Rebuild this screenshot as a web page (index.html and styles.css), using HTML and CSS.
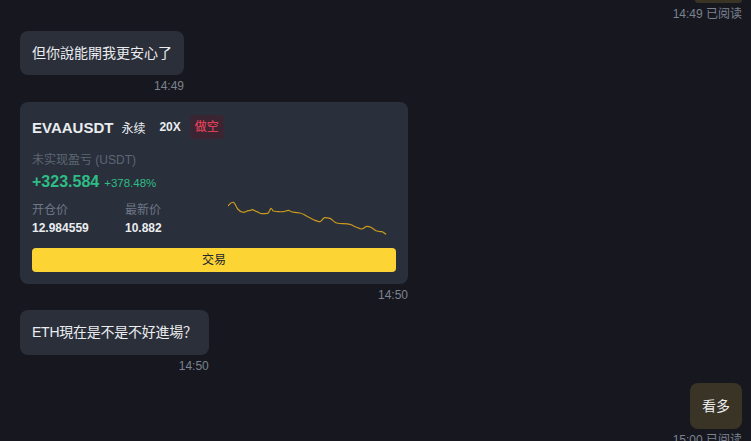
FILE: index.html
```html
<!DOCTYPE html>
<html lang="zh">
<head>
<meta charset="utf-8">
<link rel="stylesheet" href="styles.css">
</head>
<body>
<div class="chat">
  <div class="group mine">
    <div class="remnant"></div>
    <div class="meta">14:49 已阅读</div>
  </div>

  <div class="group theirs g1">
    <div class="bubble">但你說能開我更安心了</div>
    <div class="meta">14:49</div>
  </div>

  <div class="group theirs g2">
    <div class="card">
      <div class="title-row">
        <span class="symbol">EVAAUSDT</span>
        <span class="perp">永续</span>
        <span class="lev">20X</span>
        <span class="tag">做空</span>
      </div>
      <div class="pnl-label">未实现盈亏 (USDT)</div>
      <div class="pnl-row">
        <span class="pnl">+323.584</span>
        <span class="pct">+378.48%</span>
      </div>
      <div class="stats">
        <div class="stat">
          <div class="stat-label">开仓价</div>
          <div class="stat-value">12.984559</div>
        </div>
        <div class="stat">
          <div class="stat-label">最新价</div>
          <div class="stat-value">10.882</div>
        </div>
        <svg class="spark" viewBox="0 0 160 40" width="160" height="40">
          <path d="M0.3 6.7 C2 4.5 3.5 3 5.3 3.3 S8 8 9.7 10 S13 13.3 15.3 13.3 S18.5 11.7 20.3 11.7 S23 11 24.3 10.7 S27 12.5 28.7 12.7 S32 14.7 33.7 14.7 S38 14.6 39.7 14.3 S42 9.3 43 9.3 S44.5 12 45.3 12 S48 12.7 50.3 12.7 S53.5 12.8 55.3 12.7 S58.5 11.3 60.3 11.3 S62.5 12.8 64.3 13 S69 13.5 72 14 S76 16 80.3 18 S84.5 20.6 87 21.3 S90.5 22.8 92 22.7 S95 18.7 97 18.7 S100.5 19 102 19.3 S106 23.5 108.7 24 S112 24.5 115.3 24.7 S120 25 122 25.3 S125 27 127 27.7 S132 30 133.7 30 S137.5 27.3 138.7 27.3 S141.5 27.5 143.7 28.7 S147 31.5 148.7 32 S152 32.5 153.7 32.7 S156 34 157.7 35" fill="none" stroke="#c99a1d" stroke-width="1.2" stroke-linecap="round" stroke-linejoin="round"/>
        </svg>
      </div>
      <div class="trade">交易</div>
    </div>
    <div class="meta">14:50</div>
  </div>

  <div class="group theirs g3">
    <div class="bubble tight">ETH現在是不是不好進場？</div>
    <div class="meta">14:50</div>
  </div>

  <div class="group mine g4">
    <div class="bubble own">看多</div>
    <div class="meta">15:00 已阅读</div>
  </div>
</div>
</body>
</html>
```

FILE: styles.css
```css
* { box-sizing: border-box; }
html, body {
  margin: 0;
  padding: 0;
  background: #17181f;
  height: 441px;
  overflow: hidden;
}
body {
  font-family: "Liberation Sans", "Noto Sans CJK SC", sans-serif;
  color: #eaecef;
}
.chat {
  display: flex;
  flex-direction: column;
  padding: 0 9px 0 20px;
}
.group {
  display: flex;
  flex-direction: column;
}
.group.theirs {
  align-self: flex-start;
  align-items: flex-end;
}
.group.mine {
  align-self: flex-end;
  align-items: flex-end;
}
.remnant {
  width: 47px;
  height: 3px;
  background: #3a3426;
  border-radius: 0 0 8px 8px;
}
.meta {
  font-size: 12px;
  line-height: 14px;
  color: #7b8290;
  margin-top: 4px;
  white-space: nowrap;
}
.g1 { margin-top: 10px; }
.g2 { margin-top: 9px; }
.g3 { margin-top: 8px; }
.g4 { margin-top: 10px; }
.bubble {
  background: #2a2f3a;
  border-radius: 8px;
  padding: 12px 12px;
  font-size: 14px;
  line-height: 20px;
  color: #eaecef;
}
.bubble.tight {
  padding: 12px 12px 13px;
  letter-spacing: -0.25px;
}
.bubble.own {
  background: #3a3426;
  padding: 13px 12px;
}
.card {
  width: 388px;
  background: #29303c;
  border-radius: 8px;
  padding: 12px;
  display: flex;
  flex-direction: column;
}
.title-row {
  display: flex;
  align-items: center;
  height: 26px;
}
.symbol {
  font-size: 15px;
  font-weight: bold;
  color: #eaecef;
}
.perp {
  font-size: 12px;
  margin-left: 8px;
  color: #eaecef;
}
.lev {
  font-size: 12px;
  font-weight: bold;
  margin-left: 14px;
  color: #eaecef;
}
.tag {
  margin-left: 9px;
  font-size: 12px;
  color: #f6465d;
  background: #3c2533;
  border-radius: 4px;
  padding: 0 5px;
  line-height: 24px;
}
.pnl-label {
  margin-top: 13px;
  font-size: 12px;
  line-height: 14px;
  color: #5e6673;
}
.pnl-row {
  display: flex;
  align-items: baseline;
  margin-top: 6px;
  height: 20px;
}
.pnl {
  font-size: 16px;
  font-weight: bold;
  color: #2ebd85;
}
.pct {
  font-size: 11.5px;
  color: #2ebd85;
  margin-left: 5px;
}
.stats {
  display: flex;
  align-items: flex-start;
  margin-top: 8px;
  height: 36px;
}
.stat {
  width: 93px;
  display: flex;
  flex-direction: column;
  padding-top: 1px;
}
.stat-label {
  font-size: 12px;
  line-height: 16px;
  color: #6f7786;
}
.stat-value {
  font-size: 12px;
  font-weight: bold;
  line-height: 14px;
  margin-top: 3px;
  color: #eaecef;
}
.spark {
  display: block;
  margin-left: 10px;
  margin-top: -2px;
}
.trade {
  margin-top: 11px;
  height: 24px;
  line-height: 24px;
  background: #fcd535;
  color: #202630;
  border-radius: 4px;
  text-align: center;
  font-size: 12px;
}
```
